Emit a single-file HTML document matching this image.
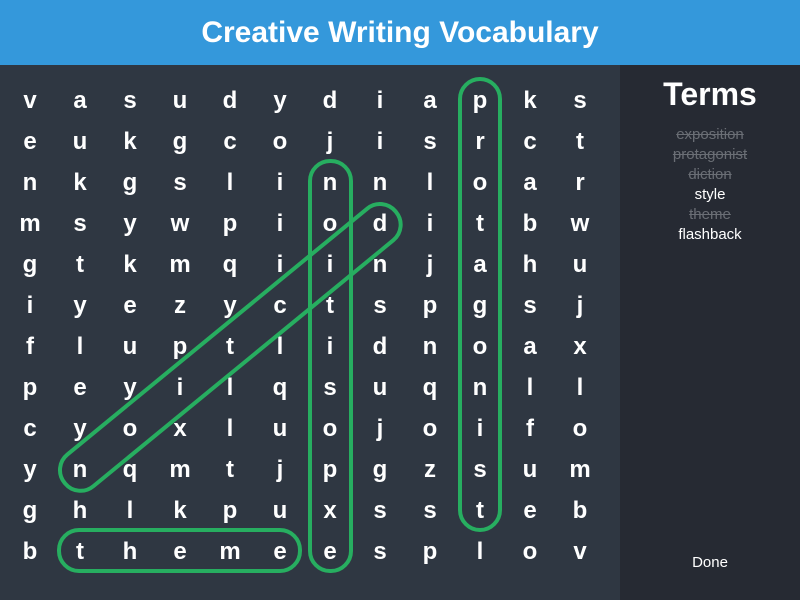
<!DOCTYPE html>
<html><head><meta charset="utf-8"><style>
body{margin:0;width:800px;height:600px;overflow:hidden;font-family:"Liberation Sans","DejaVu Sans",sans-serif;background:#2f3742;position:relative}
#hd{position:absolute;left:0;top:0;width:800px;height:65px;background:#3498db;color:#fff;font-weight:bold;font-size:30px;text-align:center;line-height:65px}
#grid{position:absolute;left:0;top:65px;width:620px;height:535px;background:#2f3742}
#side{position:absolute;left:620px;top:65px;width:180px;height:535px;background:#262a33;color:#fff;text-align:center}
.l{position:absolute;width:40px;margin-left:-20px;text-align:center;color:#fff;font-weight:bold;font-size:24px;line-height:30px;margin-top:-15px}
#side h2{margin:0;position:absolute;top:11px;width:100%;font-size:32px;font-weight:bold}
#terms{position:absolute;top:60px;width:100%;font-size:15px;line-height:20px}
.d{color:#6a6e75;text-decoration:line-through}
#done{position:absolute;top:489px;width:100%;font-size:15px}
svg{position:absolute;left:0;top:0}
</style></head><body>
<div id="hd">Creative Writing Vocabulary</div>
<div id="grid"></div>
<div id="side"><h2>Terms</h2><div id="terms"><div class="d">exposition</div><div class="d">protagonist</div><div class="d">diction</div><div>style</div><div class="d">theme</div><div>flashback</div></div><div id="done">Done</div></div>
<div id="letters"></div>
<svg width="800" height="600">
<g fill="none" stroke="#27ae60" stroke-width="4">
<rect x="460" y="79" width="40" height="451" rx="20"/>
<rect x="310" y="161" width="41" height="410" rx="20"/>
<rect x="59" y="530" width="241" height="41" rx="20"/>
<rect x="16" y="327" width="428" height="41" rx="20" transform="rotate(-39.35 230 347)"/>
</g></svg>
<script>
var rows=["vasudydiapks","eukgcojisrct","nkgslinnloar","msywpioditbw","gtkmqiinjahu","iyezyctspgsj","fluptlidnoax","peyilqsuqnll","cyoxluojoifo","ynqmtjpgzsum","ghlkpuxssteb","bthemeesplov"];
var h="";
for(var r=0;r<12;r++)for(var c=0;c<12;c++){h+='<div class="l" style="left:'+(30+50*c)+'px;top:'+(101+41*r)+'px">'+rows[r][c]+'</div>';}
document.getElementById("letters").innerHTML=h;
</script>
</body></html>
